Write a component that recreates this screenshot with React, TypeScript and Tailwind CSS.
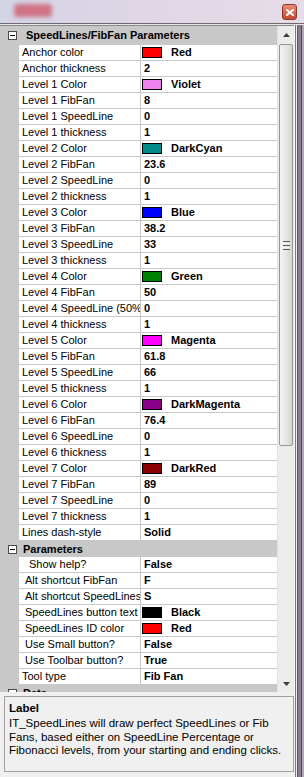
import React from "react";

type Val = string | { color: string; name: string };
type Row = { label: string; value: Val; indent?: number };

const speedRows: Row[] = [
  { label: "Anchor color", value: { color: "#ff0000", name: "Red" } },
  { label: "Anchor thickness", value: "2" },
  { label: "Level 1 Color", value: { color: "#ee82ee", name: "Violet" } },
  { label: "Level 1 FibFan", value: "8" },
  { label: "Level 1 SpeedLine", value: "0" },
  { label: "Level 1 thickness", value: "1" },
  { label: "Level 2 Color", value: { color: "#008b8b", name: "DarkCyan" } },
  { label: "Level 2 FibFan", value: "23.6" },
  { label: "Level 2 SpeedLine", value: "0" },
  { label: "Level 2 thickness", value: "1" },
  { label: "Level 3 Color", value: { color: "#0000ff", name: "Blue" } },
  { label: "Level 3 FibFan", value: "38.2" },
  { label: "Level 3 SpeedLine", value: "33" },
  { label: "Level 3 thickness", value: "1" },
  { label: "Level 4 Color", value: { color: "#008000", name: "Green" } },
  { label: "Level 4 FibFan", value: "50" },
  { label: "Level 4 SpeedLine (50%)", value: "0" },
  { label: "Level 4 thickness", value: "1" },
  { label: "Level 5 Color", value: { color: "#ff00ff", name: "Magenta" } },
  { label: "Level 5 FibFan", value: "61.8" },
  { label: "Level 5 SpeedLine", value: "66" },
  { label: "Level 5 thickness", value: "1" },
  { label: "Level 6 Color", value: { color: "#8b008b", name: "DarkMagenta" } },
  { label: "Level 6 FibFan", value: "76.4" },
  { label: "Level 6 SpeedLine", value: "0" },
  { label: "Level 6 thickness", value: "1" },
  { label: "Level 7 Color", value: { color: "#8b0000", name: "DarkRed" } },
  { label: "Level 7 FibFan", value: "89" },
  { label: "Level 7 SpeedLine", value: "0" },
  { label: "Level 7 thickness", value: "1" },
  { label: "Lines dash-style", value: "Solid" },
];

const paramRows: Row[] = [
  { label: "Show help?", value: "False", indent: 2 },
  { label: "Alt shortcut FibFan", value: "F", indent: 1 },
  { label: "Alt shortcut SpeedLines", value: "S", indent: 1 },
  { label: "SpeedLines button text", value: { color: "#000000", name: "Black" }, indent: 1 },
  { label: "SpeedLines ID color", value: { color: "#ff0000", name: "Red" }, indent: 1 },
  { label: "Use Small button?", value: "False", indent: 1 },
  { label: "Use Toolbar button?", value: "True", indent: 1 },
  { label: "Tool type", value: "Fib Fan" },
];

function Category({ title, first }: { title: string; first?: boolean }) {
  return (
    <div className={`flex items-center bg-[#c8c8c8] ${first ? "h-[19px]" : "h-4"}`}>
      <div className="ml-[8px] w-[9px] h-[9px] border border-[#4a4a4a] bg-white flex items-center justify-center">
        <div className="w-[5px] h-px bg-black" />
      </div>
      <span className={`${first ? "ml-[9px]" : "ml-[6px]"} font-bold text-[11px] text-black leading-none`}>{title}</span>
    </div>
  );
}

function PropRow({ row }: { row: Row }) {
  const pad = row.indent === 2 ? "pl-[10px]" : row.indent === 1 ? "pl-[6px]" : "pl-[3px]";
  return (
    <div className="flex h-4">
      <div className="w-[19px] bg-[#c8c8c8]" />
      <div className={`w-[122px] h-4 border-r border-b border-[#c8c8c8] bg-white overflow-hidden whitespace-nowrap text-[11px] leading-[15px] text-black ${pad}`}>
        {row.label}
      </div>
      <div className="flex-1 h-4 border-b border-[#c8c8c8] bg-white flex items-center text-[11px] font-bold text-black whitespace-nowrap">
        {typeof row.value === "string" ? (
          <span className="pl-[3px] leading-[15px]">{row.value}</span>
        ) : (
          <>
            <div className="ml-px w-[20px] h-[11px] border border-black mb-px" style={{ background: row.value.color }} />
            <span className="ml-[9px] leading-[15px]">{row.value.name}</span>
          </>
        )}
      </div>
    </div>
  );
}

function ScrollBar() {
  return (
    <div className="w-[17px] h-full bg-[#ececec] flex flex-col border-l border-[#e2e2e2]">
      <div className="h-[18px] flex items-center justify-center">
        <svg width="7" height="4" viewBox="0 0 7 4">
          <path d="M0 4 L3.5 0 L7 4 Z" fill="#3c3c3c" />
        </svg>
      </div>
      <div className="mx-px h-[402px] rounded-[2px] border border-[#979797] bg-gradient-to-r from-[#f4f4f4] via-[#e6e6e6] to-[#d4d4d4] flex flex-col items-center justify-center gap-px">
        <div className="w-[7px] h-px bg-[#5a5a5a]" />
        <div className="w-[7px] h-px bg-[#f8f8f8]" />
        <div className="w-[7px] h-px bg-[#5a5a5a]" />
        <div className="w-[7px] h-px bg-[#f8f8f8]" />
        <div className="w-[7px] h-px bg-[#5a5a5a]" />
      </div>
      <div className="flex-1" />
      <div className="h-[17px] flex items-start justify-center pt-[7px]">
        <svg width="7" height="4" viewBox="0 0 7 4">
          <path d="M0 0 L3.5 4 L7 0 Z" fill="#3c3c3c" />
        </svg>
      </div>
    </div>
  );
}

export default function App() {
  return (
    <div
      className="w-[304px] h-[777px] overflow-hidden bg-[#f0f0f0] flex flex-col"
      style={{ fontFamily: '"Liberation Sans", Arial, sans-serif' }}
    >
      {/* title bar */}
      <div className="h-[23px] flex items-start bg-gradient-to-r from-[#d3d4e6] via-[#e0d6e5] to-[#e6dde8]">
        <div className="ml-[14px] mt-[4px] w-[38px] h-[13px] bg-[#cf7385] blur-[2px] rounded-sm" />
        <div className="flex-1" />
        <div className="mt-[4px] mr-[7px] w-[15px] h-[16px] rounded-[3px] border border-[#8a3a2c] bg-gradient-to-b from-[#ea8a72] to-[#c44a30] flex items-center justify-center">
          <svg width="8" height="7" viewBox="0 0 8 7">
            <path d="M1 1 L7 6 M7 1 L1 6" stroke="#ffffff" strokeWidth="2" strokeLinecap="square" />
          </svg>
        </div>
      </div>
      <div className="h-px bg-[#6e6a70]" />
      <div className="h-px bg-[#e8e4ea]" />

      <div className="flex-1 flex">
        <div className="w-[294px] flex flex-col">
          {/* property grid */}
          <div className="h-[667px] flex border-t border-[#8a8a8a] overflow-hidden">
            <div className="w-[277px] overflow-hidden">
              <Category title="SpeedLines/FibFan Parameters" first />
              {speedRows.map((r) => (
                <PropRow key={r.label} row={r} />
              ))}
              <Category title="Parameters" />
              {paramRows.map((r) => (
                <PropRow key={r.label} row={r} />
              ))}
              <Category title="Data" />
            </div>
            <ScrollBar />
          </div>

          {/* description */}
          <div className="mt-[4px] ml-[4px] w-[290px] h-[76px] border border-[#a0a0a0] bg-[#f0f0f0] px-[4px] pt-[4px] text-black">
            <div className="font-bold text-[11.5px] leading-[14px]">Label</div>
            <div className="text-[11.5px] leading-[13.5px] mt-[2px] whitespace-nowrap">
              <div>IT_SpeedLines will draw perfect SpeedLines or Fib</div>
              <div>Fans, based either on SpeedLine Percentage or</div>
              <div>Fibonacci levels, from your starting and ending clicks.</div>
            </div>
          </div>
        </div>

        {/* window frame on the right */}
        <div className="flex">
          <div className="w-px bg-[#f4f4f4]" />
          <div className="w-px bg-[#7a7a7a]" />
          <div className="w-px bg-[#eeeeee]" />
          <div className="w-px bg-[#5c5c5c]" />
          <div className="w-[3px] bg-[#8c7b91]" />
          <div className="w-px bg-[#4f4a52]" />
          <div className="w-[2px] bg-[#b2a6b6]" />
        </div>
      </div>
    </div>
  );
}
